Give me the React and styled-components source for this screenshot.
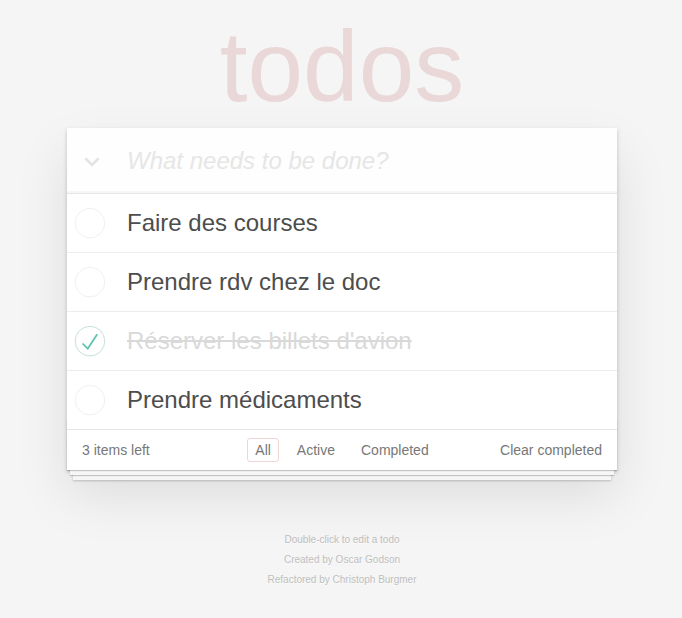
import styled, { createGlobalStyle } from "styled-components";

const todos = [
  { id: 1, title: "Faire des courses", done: false },
  { id: 2, title: "Prendre rdv chez le doc", done: false },
  { id: 3, title: "Réserver les billets d'avion", done: true },
  { id: 4, title: "Prendre médicaments", done: false },
];

const filters = ["All", "Active", "Completed"];

function Toggle({ done }) {
  return (
    <svg width="40" height="40" viewBox="-10 -18 100 135">
      <circle
        cx="50"
        cy="50"
        r="50"
        fill="none"
        stroke={done ? "#bddad5" : "#ededed"}
        strokeWidth="3"
      />
      {done && <path fill="#5dc2af" d="M72 25L42 71 27 56l-4 4 20 20 34-52z" />}
    </svg>
  );
}

export default function App() {
  const left = todos.filter((t) => !t.done).length;

  return (
    <>
      <GlobalStyle />
      <Page>
        <Title>todos</Title>
        <TodoApp>
          <Header>
            <ToggleAll>
              <svg width="16" height="10" viewBox="0 0 16 10">
                <polyline
                  points="1.5,1.5 8,8 14.5,1.5"
                  fill="none"
                  stroke="#e3e3e3"
                  strokeWidth="2.6"
                />
              </svg>
            </ToggleAll>
            <NewTodo placeholder="What needs to be done?" autoFocus />
          </Header>
          <List>
            {todos.map((t) => (
              <Item key={t.id}>
                <ToggleBox>
                  <Toggle done={t.done} />
                </ToggleBox>
                <Label done={t.done}>{t.title}</Label>
              </Item>
            ))}
          </List>
          <Footer>
            <Count>
              <strong>{left}</strong> items left
            </Count>
            <Filters>
              {filters.map((f) => (
                <Filter key={f} selected={f === "All"}>
                  {f}
                </Filter>
              ))}
            </Filters>
            <ClearButton>Clear completed</ClearButton>
          </Footer>
        </TodoApp>
        <Info>
          <p>Double-click to edit a todo</p>
          <p>Created by Oscar Godson</p>
          <p>Refactored by Christoph Burgmer</p>
        </Info>
      </Page>
    </>
  );
}

const GlobalStyle = createGlobalStyle`
  html, body {
    margin: 0;
    padding: 0;
  }

  body {
    background: #f5f5f5;
    color: #4d4d4d;
    font: 14px "Liberation Sans", Arial, sans-serif;
    line-height: 1.4em;
  }
`;

const Page = styled.div`
  width: 550px;
  margin: 0 calc(50% - 276px) 0 calc(50% - 274px);
  padding-top: 16px;
`;

const Title = styled.h1`
  margin: 0 0 12px;
  font-size: 100px;
  line-height: 100px;
  font-weight: 400;
  text-align: center;
  color: rgba(175, 47, 47, 0.15);
`;

const TodoApp = styled.section`
  position: relative;
  background: #fff;
  box-shadow: 0 2px 4px 0 rgba(0, 0, 0, 0.2), 0 25px 50px 0 rgba(0, 0, 0, 0.1);
`;

const Header = styled.header`
  display: flex;
  align-items: center;
  background: rgba(0, 0, 0, 0.003);
  box-shadow: inset 0 -2px 1px rgba(0, 0, 0, 0.03);
`;

const ToggleAll = styled.div`
  width: 60px;
  box-sizing: border-box;
  display: flex;
  padding: 2px 0 0 17px;
`;

const NewTodo = styled.input`
  flex: 1;
  min-width: 0;
  border: none;
  outline: none;
  background: transparent;
  padding: 16px 16px 16px 0;
  font: 24px "Liberation Sans", Arial, sans-serif;
  line-height: 33px;
  height: 33px;
  color: #4d4d4d;
  caret-color: #333;

  &::placeholder {
    font-style: italic;
    color: #e6e6e6;
  }
`;

const List = styled.ul`
  margin: 0;
  padding: 0;
  list-style: none;
  border-top: 1px solid #e6e6e6;
`;

const Item = styled.li`
  display: flex;
  align-items: center;
  border-bottom: 1px solid #ededed;
  font-size: 24px;

  &:last-child {
    border-bottom: none;
  }
`;

const ToggleBox = styled.div`
  width: 60px;
  display: flex;
  align-items: center;

  svg {
    display: block;
  }
`;

const Label = styled.label`
  flex: 1;
  padding: 15px 15px 15px 0;
  line-height: 28px;
  color: ${(p) => (p.done ? "#d9d9d9" : "#4d4d4d")};
  text-decoration: ${(p) => (p.done ? "line-through" : "none")};
  word-break: break-all;
`;

const Footer = styled.footer`
  position: relative;
  display: grid;
  grid-template-columns: 1fr auto 1fr;
  grid-template-rows: 20px;
  align-items: center;
  height: 20px;
  padding: 10px 15px;
  color: #777;
  border-top: 1px solid #e6e6e6;

  &::before {
    content: "";
    position: absolute;
    right: 0;
    bottom: 0;
    left: 0;
    height: 50px;
    overflow: hidden;
    pointer-events: none;
    box-shadow: 0 1px 1px rgba(0, 0, 0, 0.2), 0 8px 0 -3px #f6f6f6,
      0 9px 1px -3px rgba(0, 0, 0, 0.2), 0 16px 0 -6px #f6f6f6,
      0 17px 2px -6px rgba(0, 0, 0, 0.2);
  }
`;

const Count = styled.span`
  text-align: left;
  line-height: 20px;

  strong {
    font-weight: 400;
  }
`;

const Filters = styled.ul`
  display: flex;
  align-items: center;
  gap: 4px;
  margin: 0;
  padding: 0;
  list-style: none;
`;

const Filter = styled.li`
  margin: 0 3px;
  padding: 3px 7px;
  line-height: 16px;
  border: 1px solid ${(p) => (p.selected ? "rgba(175, 47, 47, 0.2)" : "transparent")};
  border-radius: 3px;
`;

const ClearButton = styled.button`
  justify-self: end;
  position: relative;
  z-index: 1;
  margin: 0;
  padding: 0;
  border: none;
  background: none;
  color: inherit;
  font: 14px "Liberation Sans", Arial, sans-serif;
  line-height: 20px;
`;

const Info = styled.footer`
  margin: 65px auto 0;
  color: #bfbfbf;
  font-size: 10px;
  text-shadow: 0 1px 0 rgba(255, 255, 255, 0.5);
  text-align: center;

  p {
    margin: 10px 0;
    line-height: 1;
  }
`;
